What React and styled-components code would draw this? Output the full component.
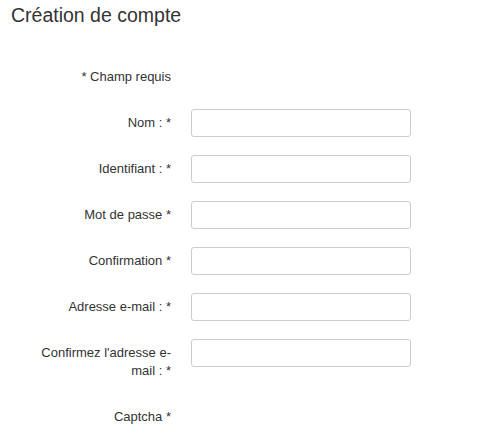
import styled, { createGlobalStyle } from "styled-components";

const GlobalStyle = createGlobalStyle`
  html, body {
    margin: 0;
    padding: 0;
    background: #fff;
  }
  body {
    font-family: "Liberation Sans", Arial, sans-serif;
    font-size: 13px;
    color: #333;
  }
  * {
    box-sizing: border-box;
  }
`;

const Page = styled.div({
  padding: "3px 11px 0",
});

const Title = styled.h1({
  margin: 0,
  fontSize: "19.5px",
  lineHeight: "24px",
  fontWeight: "normal",
  color: "#333",
});

const Form = styled.form({
  display: "flex",
  flexDirection: "column",
  marginTop: "36px",
  paddingLeft: "20px",
});

const Row = styled.div({
  display: "flex",
  alignItems: "flex-start",
  gap: "20px",
  marginBottom: "18px",
});

const Label = styled.label({
  width: "140px",
  flexShrink: 0,
  padding: "5px 0",
  textAlign: "right",
  lineHeight: "18px",
  color: "#333",
});

const TextInput = styled.input({
  width: "220px",
  height: "28px",
  padding: "4px 8px",
  border: "1px solid #ccc",
  borderRadius: "3px",
  background: "#fff",
  fontFamily: "inherit",
  fontSize: "13px",
  outline: "none",
});

const fields = [
  { id: "nom", label: "Nom : *" },
  { id: "login", label: "Identifiant : *" },
  { id: "pass", label: "Mot de passe *", type: "password" },
  { id: "confirm", label: "Confirmation *", type: "password" },
  { id: "mail", label: "Adresse e-mail : *" },
  { id: "mail2", label: "Confirmez l'adresse e-mail : *" },
];

export default function App() {
  return (
    <Page>
      <GlobalStyle />
      <Title>Création de compte</Title>
      <Form onSubmit={(e) => e.preventDefault()}>
        <Row>
          <Label as="div">* Champ requis</Label>
        </Row>
        {fields.map((f) => (
          <Row key={f.id}>
            <Label htmlFor={f.id}>{f.label}</Label>
            <TextInput id={f.id} type={f.type || "text"} />
          </Row>
        ))}
        <Row>
          <Label as="div">Captcha *</Label>
        </Row>
      </Form>
    </Page>
  );
}
